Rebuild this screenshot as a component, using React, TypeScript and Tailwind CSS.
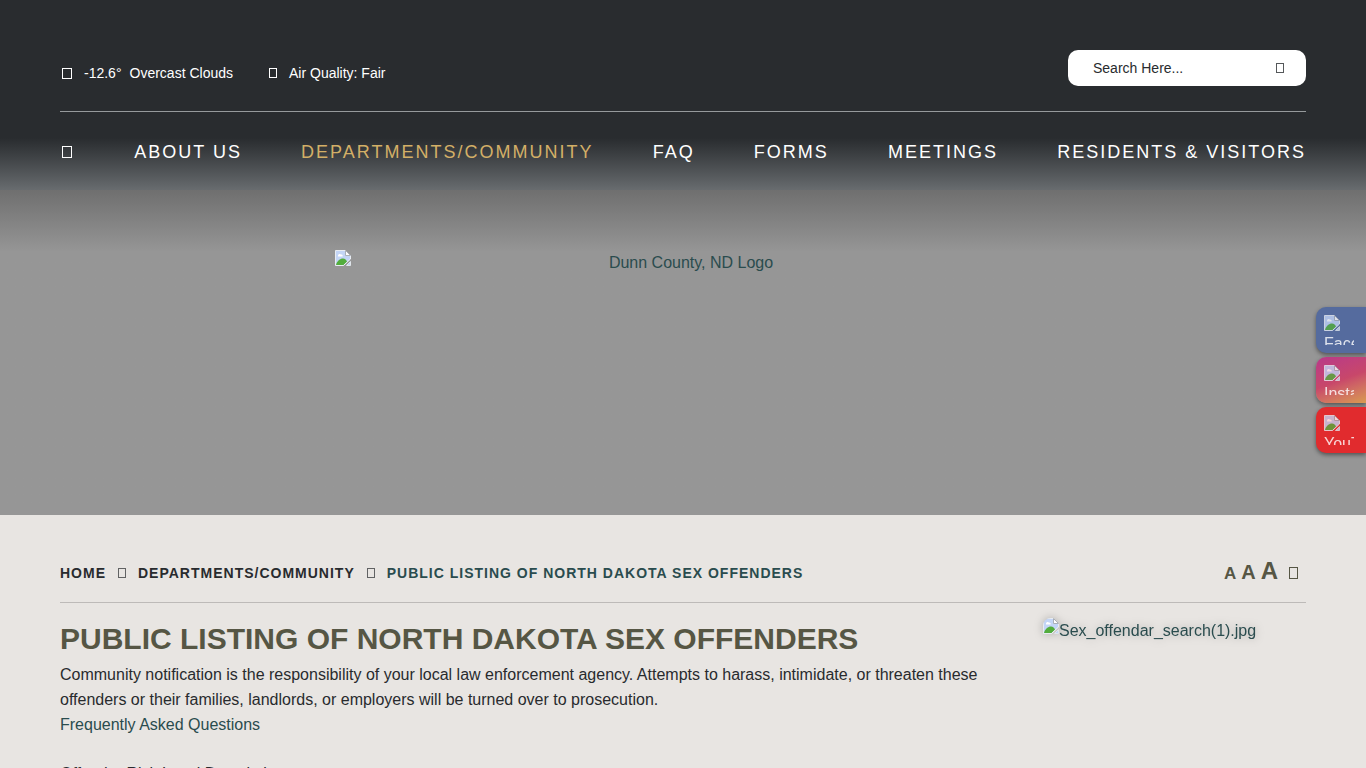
import React from "react";

const navItems = [
  { label: "About Us", active: false },
  { label: "Departments/Community", active: true },
  { label: "FAQ", active: false },
  { label: "Forms", active: false },
  { label: "Meetings", active: false },
  { label: "Residents & Visitors", active: false },
];

const socials = [
  { name: "Facebook", className: "bg-[#556b9e]" },
  { name: "Instagram", className: "bg-linear-160 from-[#b8398a] via-[#c8476a] to-[#d89a4e]" },
  { name: "YouTube", className: "bg-[#e12b2e]" },
];

function Glyph({ className = "" }: { className?: string }) {
  return <span aria-hidden="true" className={`inline-block border border-current ${className}`} />;
}

function MissingImage({ className = "" }: { className?: string }) {
  return (
    <svg aria-hidden="true" viewBox="0 0 16 16" className={`size-4 shrink-0 ${className}`}>
      <path d="M0.5 0.5H10L15.5 6V9L8.5 15.5H0.5Z" fill="#c3d5f6" />
      <path d="M1 15C2 11 5 8.5 8 8.5C10 8.5 11.500 10 12 11.800L8.500 15Z" fill="#53ad3d" />
      <path d="M3 5.500C3 4 5 3.500 6 4.500C7.500 4.500 8 5.500 7.500 6.500H3Z" fill="#fff" />
      <path d="M8.500 15.500H0.500V0.500H10.500L15.500 5.500V9" fill="none" stroke="#e8ecf2" />
      <path d="M10.500 0.500V5.500H15.500Z" fill="#fff" stroke="#aab0b8" />
      <path d="M15.500 9L8.500 15.500" fill="none" stroke="#f1f4f7" />
      <path d="M15.500 11.500V15.500H11.500Z" fill="#c3d5f6" stroke="#dfe5ea" />
    </svg>
  );
}

export default function App() {
  return (
    <div className="h-screen overflow-hidden bg-[#e8e5e2] font-['Liberation_Sans',Arial,sans-serif] text-base text-[#282b2e]">
      <header className="bg-[#969696] bg-linear-to-b from-[#696969] from-[180px] to-[#969696] to-[252px] pb-60">
        <div className="bg-linear-to-b from-[#292c2f] from-[138px] to-[#686c6f] px-15 pt-[50px] pb-6">
          <div className="flex justify-between border-b border-[#969a9c] pb-[25px] text-white">
            <div className="flex items-center gap-9 pt-[10px] text-sm">
              <span className="flex items-center">
                <Glyph className="mr-3 ml-[2px] h-[11px] w-[10px]" />
                <span className="mr-2">-12.6°</span>
                <span>Overcast Clouds</span>
              </span>
              <span className="flex items-center">
                <Glyph className="mr-3 h-[10px] w-2" />
                <span>Air Quality: Fair</span>
              </span>
            </div>
            <form className="flex h-9 w-[238px] items-center rounded-[10px] bg-white pr-5 pl-[25px] text-[#282b2e]" onSubmit={(e) => e.preventDefault()}>
              <input
                type="search"
                aria-label="Search"
                placeholder="Search Here..."
                className="min-w-0 flex-1 bg-transparent text-sm outline-none placeholder:text-[#282b2e]"
              />
              <button type="submit" aria-label="Submit search" className="flex size-3 items-center justify-center text-[#55585a]">
                <Glyph className="h-[10px] w-2" />
              </button>
            </form>
          </div>
          <nav aria-label="Main" className="flex items-center justify-between pt-[26px] text-lg tracking-[2px] text-white uppercase">
            <a href="#" aria-label="Home" className="flex pr-[3px] pl-[2px]">
              <Glyph className="h-3 w-[10px]" />
            </a>
            {navItems.map((item) => (
              <a key={item.label} href="#" className={item.active ? "text-[#d3af67]" : ""}>
                {item.label}
              </a>
            ))}
          </nav>
        </div>
        <a href="#" className="mx-auto mt-[60px] flex h-[25px] w-[696px] items-start text-[#2a4c4e]">
          <MissingImage />
          <span className="flex-1 text-center leading-[25px]">Dunn County, ND Logo</span>
        </a>
      </header>

      <aside aria-label="Social media" className="fixed top-[307px] right-0 flex flex-col gap-1">
        {socials.map((s) => (
          <a key={s.name} href="#" className={`h-[46px] w-[50px] rounded-l-[10px] p-2 shadow-[0_2px_4px_rgba(0,0,0,0.45)] ${s.className}`}>
            <span className="block h-[30px] w-[30px] overflow-hidden text-white opacity-80">
              <MissingImage />
              <span className="block leading-[25px]">{s.name}</span>
            </span>
          </a>
        ))}
      </aside>

      <main className="px-15 pt-[41px]">
        <div className="flex items-center justify-between border-b border-[#bdbab8] pb-[13px]">
          <nav aria-label="Breadcrumb" className="flex items-center text-sm font-bold tracking-[1px] uppercase">
            <a href="#">Home</a>
            <Glyph className="mx-3 h-[10px] w-2 opacity-70" />
            <a href="#">Departments/Community</a>
            <Glyph className="mx-3 h-[10px] w-2 opacity-70" />
            <span className="text-[#2a4c4e]">Public Listing of North Dakota Sex Offenders</span>
          </nav>
          <div className="flex items-baseline gap-[5px] pr-2 font-bold text-[#565644]">
            <button type="button" aria-label="Small text" className="text-[17px] leading-[30px]">A</button>
            <button type="button" aria-label="Medium text" className="text-xl leading-[30px]">A</button>
            <button type="button" aria-label="Large text" className="text-2xl leading-[30px]">A</button>
            <button type="button" aria-label="Print" className="ml-[6px]">
              <Glyph className="h-3 w-[9px]" />
            </button>
          </div>
        </div>
        <div className="flex pt-[15px]">
          <div className="min-w-0 flex-1 leading-[25px]">
            <h1 className="mb-[2px] text-[30px] leading-[42px] font-bold text-[#565644] uppercase">
              Public Listing of North Dakota Sex Offenders
            </h1>
            <p className="max-w-[935px]">
              Community notification is the responsibility of your local law enforcement agency. Attempts to harass, intimidate, or threaten
              these offenders or their families, landlords, or employers will be turned over to prosecution.
            </p>
            <a href="#" className="block text-[#2a4c4e]">Frequently Asked Questions</a>
            <a href="#" className="mt-6 block text-[#282b2e]">Offender Risk Level Descriptions</a>
          </div>
          <a href="#" className="flex w-[263px] items-start text-[#2a4c4e] drop-shadow-[0_0_4px_rgba(0,0,0,0.25)]">
            <MissingImage className="rounded-tl-[8px]" />
            <span className="leading-[25px]">Sex_offendar_search(1).jpg</span>
          </a>
        </div>
      </main>
    </div>
  );
}
